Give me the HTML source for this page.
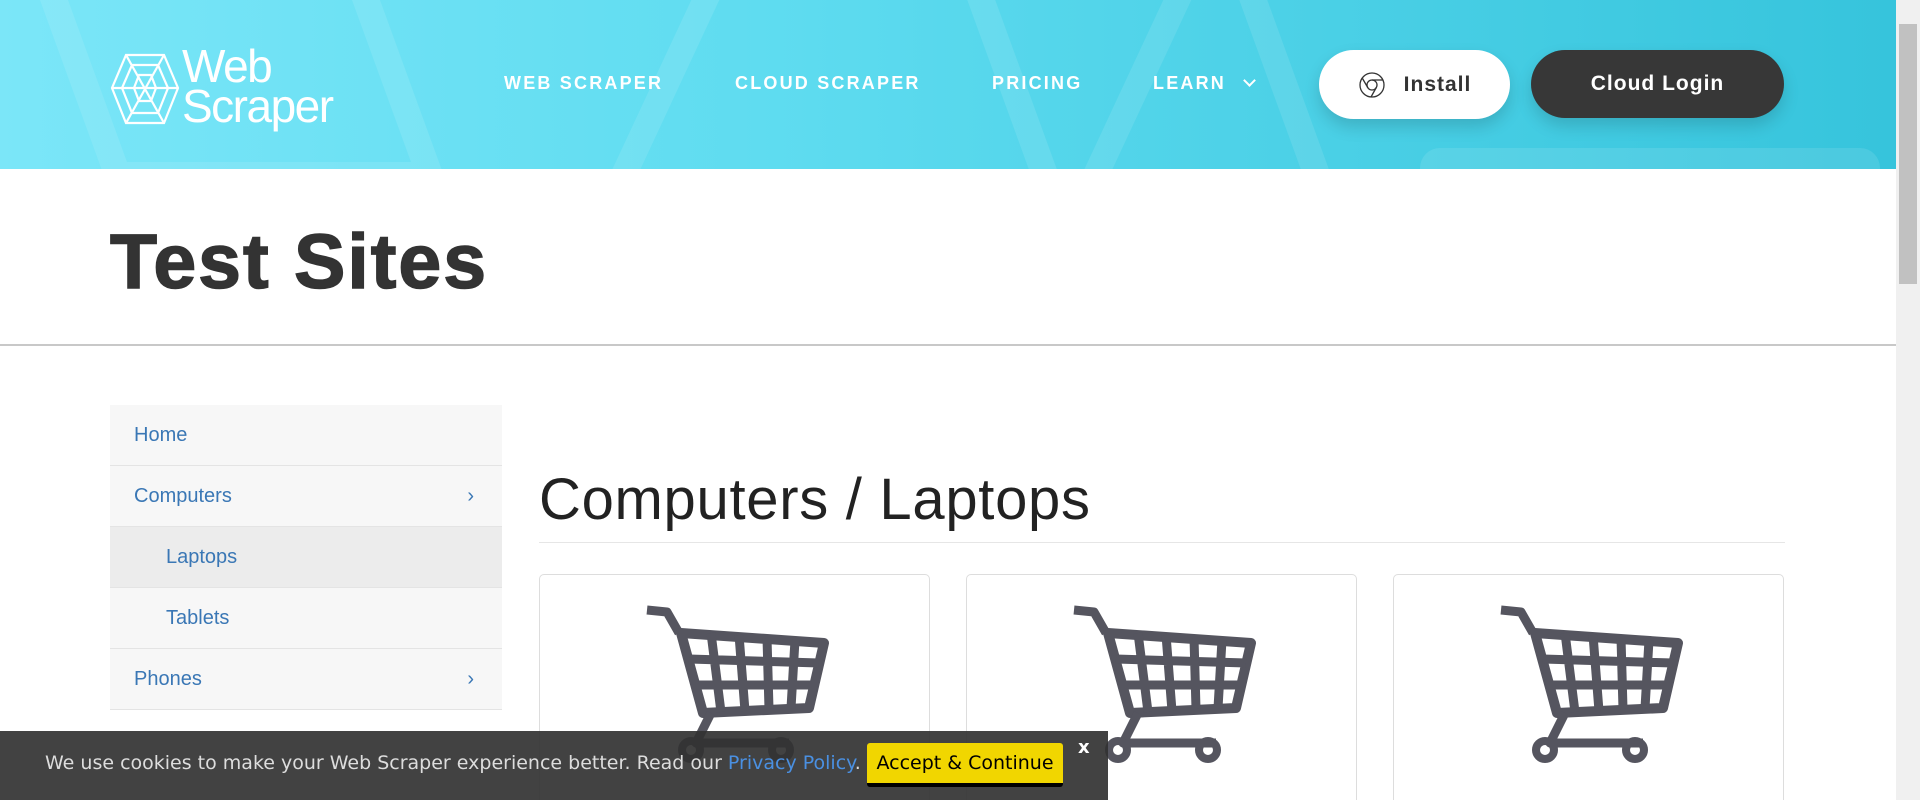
<!DOCTYPE html>
<html><head><meta charset="utf-8">
<style>
*{margin:0;padding:0;box-sizing:border-box}
html{width:1920px;height:800px;overflow:hidden}
body{width:1920px;height:800px;overflow:hidden;background:#fff;font-family:"Liberation Sans",sans-serif;position:relative}
.hdr{position:absolute;left:0;top:0;width:1896px;height:169px;background:linear-gradient(90deg,#7be6f8 0%,#5fdcf0 40%,#36c4dc 100%);overflow:hidden}
.deco{position:absolute;border:28px solid rgba(255,255,255,0.1);border-radius:20px}
.nav{position:absolute;top:73px;color:#fff;font-size:18px;letter-spacing:2.2px;font-weight:bold;}
.btn{position:absolute;border-radius:40px;display:flex;align-items:center;justify-content:center;font-weight:bold;font-size:21px;letter-spacing:1px;box-shadow:0 8px 16px rgba(0,0,0,0.15)}
.sb{position:absolute;right:0;top:0;width:24px;height:800px;background:#f0f0f0}
h1{position:absolute;left:110px;top:224px;font-size:77px;font-weight:bold;color:#333;line-height:1;letter-spacing:2px;-webkit-text-stroke:1.5px #333}
.rule{position:absolute;left:0;top:344px;width:1896px;height:2px;background:#c8c8c8}
.side{position:absolute;left:110px;top:405px;width:392px;background:#f7f7f7}
.side div{height:61px;border-bottom:1px solid #e4e4e4;color:#3a77b5;font-size:20px;line-height:60px;padding-left:24px;position:relative}
.side .sub{padding-left:56px}
.side .act{background:#ececec}
.side .ch{position:absolute;right:28px;top:0;font-size:20px}
h2{position:absolute;left:539px;top:471px;font-size:58px;font-weight:normal;color:#222;line-height:1;letter-spacing:0.7px}
.hr2{position:absolute;left:539px;top:542px;width:1246px;height:1px;background:#e6e6e6}
.card{position:absolute;top:574px;width:391px;height:240px;border:1px solid #ddd;border-radius:5px;background:#fff}
.card svg{position:absolute;left:101px;top:26px}
.cookie{position:absolute;left:0;top:731px;width:1108px;height:69px;background:rgba(50,50,50,0.92);color:#ddd;font-family:"DejaVu Sans",sans-serif;font-size:19px}
.cookie .t{position:absolute;left:45px;top:21px;white-space:nowrap}
.cookie a{color:#4a90e2;text-decoration:none}
.acc{position:absolute;left:867px;top:12px;width:196px;height:44px;background:#f1d600;color:#000;border-bottom:4px solid #000;border-radius:3px;text-align:center;line-height:40px;font-size:19px}
.x{position:absolute;left:1078px;top:6px;color:#fff;font-weight:bold;font-size:18px}
</style></head><body>
<div class="hdr">
  <div class="deco" style="left:60px;top:-80px;width:340px;height:270px;transform:skewX(20deg)"></div>
  <div class="deco" style="left:640px;top:-40px;width:500px;height:300px;transform:skewX(-25deg)"></div>
  <div class="deco" style="left:1000px;top:-60px;width:300px;height:300px;transform:skewX(20deg)"></div>
  <div class="deco" style="left:1420px;top:148px;width:460px;height:100px"></div>
  <svg style="position:absolute;left:110px;top:53px" width="70" height="72" viewBox="0 0 70 72" fill="none" stroke="#fff" stroke-width="2.2">
    <polygon points="16,2 54,2 68,35 54,70 16,70 2,35"/>
    <polygon points="22,12 48,12 58,35 48,60 22,60 12,35"/>
    <polygon points="29,22 41,22 46,35 41,48 29,48 24,35"/>
    <line x1="16" y1="2" x2="54" y2="70"/><line x1="54" y1="2" x2="16" y2="70"/><line x1="2" y1="35" x2="68" y2="35"/>
  </svg>
  <div style="position:absolute;left:182px;top:46px;color:#fff;font-size:46px;line-height:40px;letter-spacing:-1.5px">Web<br>Scraper</div>
  <div class="nav" style="left:504px">WEB SCRAPER</div>
  <div class="nav" style="left:735px">CLOUD SCRAPER</div>
  <div class="nav" style="left:992px">PRICING</div>
  <div class="nav" style="left:1153px">LEARN <span style="display:inline-block;width:9px;height:9px;border-right:2.5px solid #fff;border-bottom:2.5px solid #fff;transform:rotate(45deg);margin-left:12px;position:relative;top:-4px"></span></div>
  <div class="btn" style="left:1319px;top:50px;width:191px;height:69px;background:#fff;color:#333">
    <svg width="28" height="28" viewBox="0 0 28 28" fill="none" stroke="#333" stroke-width="1.3" style="margin-right:18px"><circle cx="14" cy="14" r="12"/><circle cx="14" cy="14" r="5"/><line x1="14" y1="9" x2="24.5" y2="9"/><line x1="9.7" y1="16.5" x2="4.5" y2="7.5"/><line x1="18.3" y1="16.5" x2="13" y2="26"/></svg>Install</div>
  <div class="btn" style="left:1531px;top:50px;width:253px;height:68px;background:#373737;color:#fff">Cloud Login</div>
</div>
<div class="sb"><div style="position:absolute;left:3px;top:24px;width:18px;height:260px;background:#c1c1c1"></div></div>
<h1>Test Sites</h1>
<div class="rule"></div>
<div class="side">
  <div>Home</div>
  <div>Computers<span class="ch">›</span></div>
  <div class="sub act">Laptops</div>
  <div class="sub">Tablets</div>
  <div>Phones<span class="ch">›</span></div>
</div>
<h2>Computers / Laptops</h2>
<div class="hr2"></div>
<div class="card" style="left:539px"><svg width="190" height="170" viewBox="0 0 190 170"><g fill="none" stroke="#55555f" stroke-width="9" stroke-linejoin="round"><path d="M6,9 L26,11 L38,32"/><polygon points="40,32 183,42 168,107 62,112" stroke-width="10"/><path d="M48,58 L178,62 M55,84 L172,84 M70,32 L80,111 M98,34 L104,110 M126,37 L128,108 M154,39 L150,107"/><path d="M70,112 L55,142 L148,142"/></g><g fill="none" stroke="#55555f" stroke-width="8"><circle cx="50" cy="149" r="9"/><circle cx="140" cy="149" r="9"/></g></svg></div>
<div class="card" style="left:966px"><svg width="190" height="170" viewBox="0 0 190 170"><g fill="none" stroke="#55555f" stroke-width="9" stroke-linejoin="round"><path d="M6,9 L26,11 L38,32"/><polygon points="40,32 183,42 168,107 62,112" stroke-width="10"/><path d="M48,58 L178,62 M55,84 L172,84 M70,32 L80,111 M98,34 L104,110 M126,37 L128,108 M154,39 L150,107"/><path d="M70,112 L55,142 L148,142"/></g><g fill="none" stroke="#55555f" stroke-width="8"><circle cx="50" cy="149" r="9"/><circle cx="140" cy="149" r="9"/></g></svg></div>
<div class="card" style="left:1393px"><svg width="190" height="170" viewBox="0 0 190 170"><g fill="none" stroke="#55555f" stroke-width="9" stroke-linejoin="round"><path d="M6,9 L26,11 L38,32"/><polygon points="40,32 183,42 168,107 62,112" stroke-width="10"/><path d="M48,58 L178,62 M55,84 L172,84 M70,32 L80,111 M98,34 L104,110 M126,37 L128,108 M154,39 L150,107"/><path d="M70,112 L55,142 L148,142"/></g><g fill="none" stroke="#55555f" stroke-width="8"><circle cx="50" cy="149" r="9"/><circle cx="140" cy="149" r="9"/></g></svg></div>
<div class="cookie">
  <div class="t">We use cookies to make your Web Scraper experience better. Read our <a>Privacy Policy</a>.</div>
  <div class="acc">Accept &amp; Continue</div>
  <div class="x">x</div>
</div>
</body></html>
